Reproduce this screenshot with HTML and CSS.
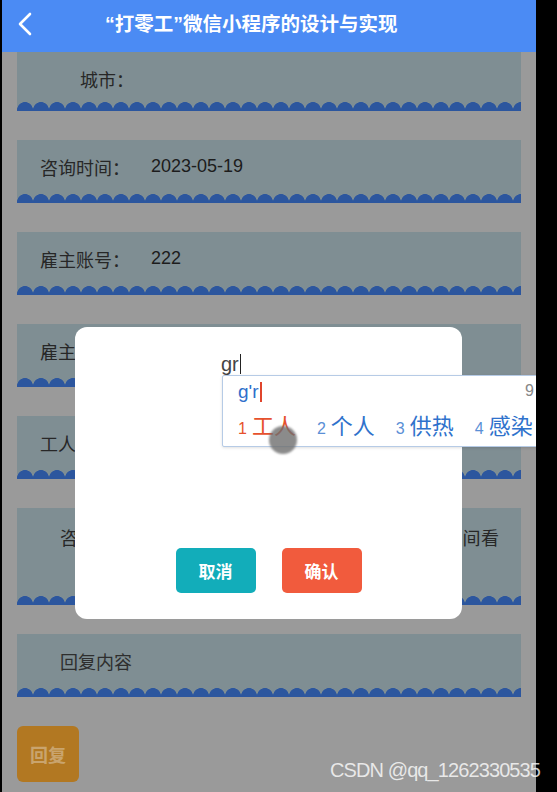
FILE: index.html
```html
<!DOCTYPE html>
<html lang="zh-CN">
<head>
    <meta charset="UTF-8">
    <meta name="viewport" content="width=device-width, initial-scale=1.0">
    <title>“打零工”微信小程序的设计与实现</title>
    <link rel="stylesheet" href="styles.css">
</head>
<body>
    <div class="screen">
        <header class="nav-bar">
            <svg class="nav-back" width="16" height="24" viewBox="0 0 16 24">
                <path d="M13 2 L3 12 L13 22" fill="none" stroke="#fff" stroke-width="2.6" stroke-linecap="round" stroke-linejoin="round"/>
            </svg>
            <h1 class="nav-title">“打零工”微信小程序的设计与实现</h1>
        </header>

        <div class="content">
            <div class="card">
                <div class="card-body card-city">城市：</div>
                <div class="wave"></div>
            </div>
            <div class="card">
                <div class="card-body"><span class="label">咨询时间：</span><span class="value">2023-05-19</span></div>
                <div class="wave"></div>
            </div>
            <div class="card">
                <div class="card-body"><span class="label">雇主账号：</span><span class="value">222</span></div>
                <div class="wave"></div>
            </div>
            <div class="card">
                <div class="card-body"><span class="label">雇主姓名：</span><span class="value">张三</span></div>
                <div class="wave"></div>
            </div>
            <div class="card">
                <div class="card-body"><span class="label">工人账号：</span><span class="value">111</span></div>
                <div class="wave"></div>
            </div>
            <div class="card">
                <div class="card-body card-text">咨询内容：你好，请问这份工作什么时候可以抽时间看</div>
                <div class="wave"></div>
            </div>
            <div class="card">
                <div class="card-body card-placeholder">回复内容</div>
                <div class="wave"></div>
            </div>
            <button class="btn-reply">回复</button>
        </div>

        <!-- reply dialog -->
        <div class="dialog">
            <div class="dialog-input">gr<span class="caret"></span></div>
            <div class="dialog-actions">
                <button class="btn btn-cancel">取消</button>
                <button class="btn btn-ok">确认</button>
            </div>
        </div>

        <!-- input method candidates -->
        <div class="ime">
            <div class="ime-code">g'r<span class="ime-caret"></span><span class="ime-page">9</span></div>
            <div class="ime-list">
                <span class="ime-item active"><i>1</i>工人</span>
                <span class="ime-item"><i>2</i>个人</span>
                <span class="ime-item"><i>3</i>供热</span>
                <span class="ime-item"><i>4</i>感染</span>
            </div>
        </div>
        <div class="touch-dot"></div>
    </div>

    <div class="watermark">CSDN @qq_1262330535</div>
</body>
</html>
```

FILE: styles.css
```css
body {
    margin: 0;
    background: #000;
    width: 557px;
    height: 792px;
    overflow: hidden;
    position: relative;
    font-family: "Liberation Sans", "Noto Sans CJK SC", sans-serif;
}
.screen {
    position: relative;
    margin-left: 2px;
    width: 534px;
    height: 792px;
    background: #9a9a9a;
    overflow: hidden;
}
.nav-bar {
    height: 52px;
    background: #4b8bf4;
    display: flex;
    align-items: center;
}
.nav-back {
    margin-left: 15px;
    margin-top: -4px;
}
.nav-title {
    margin: -8px 0 0 72px;
    font-size: 19.5px;
    font-weight: bold;
    color: #fff;
}
.content {
    padding: 0 15px;
}
.card {
    background: #7f8e93;
    margin-bottom: 29px;
}
.card-body {
    height: 53px;
    display: flex;
    align-items: center;
    padding-left: 23px;
    font-size: 18px;
    color: #272727;
}
.card-city {
    height: 49px;
    padding-top: 5px;
    box-sizing: border-box;
    padding-left: 63px;
}
.label {
    width: 111px;
}
.value {
    font-size: 18px;
    color: #1c1c1c;
}
.card-text {
    height: 87px;
    align-items: flex-start;
    padding-top: 16px;
    box-sizing: border-box;
    padding-left: 43px;
    letter-spacing: 0.3px;
    white-space: nowrap;
}
.card-placeholder {
    padding-left: 43px;
    color: #2e2e2e;
}
.wave {
    height: 10px;
    background: radial-gradient(circle at 8px 9px, #2c569e 7.6px, transparent 8.2px) repeat-x;
    background-size: 16px 10px;
    border-bottom: 1px solid #2c569e;
    box-sizing: border-box;
}
.btn-reply {
    width: 62px;
    height: 56px;
    border: none;
    border-radius: 6px;
    background: #b27822;
    color: #c9a46e;
    font-size: 18px;
    font-weight: bold;
    font-family: "Noto Sans CJK SC", sans-serif;
    padding: 0;
}
.dialog {
    position: absolute;
    left: 73px;
    top: 327px;
    width: 387px;
    height: 292px;
    background: #fff;
    border-radius: 12px;
    display: flex;
    flex-direction: column;
    justify-content: space-between;
    box-sizing: border-box;
    padding: 24px 0 26px;
}
.dialog-input {
    padding-left: 146px;
    font-size: 20px;
    line-height: 26px;
    color: #444;
    display: flex;
    align-items: center;
}
.caret {
    width: 1px;
    height: 20px;
    background: #222;
    margin-left: 1px;
}
.dialog-actions {
    display: flex;
    justify-content: center;
    gap: 26px;
}
.btn {
    width: 80px;
    height: 45px;
    border: none;
    border-radius: 5px;
    color: #fff;
    font-size: 17px;
    font-weight: bold;
    font-family: "Noto Sans CJK SC", sans-serif;
}
.btn-cancel {
    background: #12adba;
}
.btn-ok {
    background: #f15b3d;
}
.ime {
    position: absolute;
    left: 220px;
    top: 375px;
    width: 340px;
    height: 72px;
    background: #fff;
    border: 1px solid #b6cbe6;
    border-radius: 2px;
    box-sizing: border-box;
    box-shadow: 0 1px 3px rgba(0,0,0,0.12);
}
.ime-code {
    position: relative;
    display: flex;
    align-items: center;
    height: 32px;
    padding-left: 15px;
    font-size: 19px;
    color: #2f6fcb;
}
.ime-caret {
    width: 2px;
    height: 20px;
    background: #e0452c;
    margin-left: 1px;
}
.ime-page {
    position: absolute;
    left: 302px;
    top: 6px;
    color: #888;
    font-size: 16px;
}
.ime-list {
    display: flex;
    gap: 21px;
    padding-left: 15px;
    margin-top: 1px;
}
.ime-item {
    font-family: "Noto Sans CJK SC", sans-serif;
    font-size: 22px;
    line-height: 30px;
    color: #2f72cc;
    white-space: nowrap;
}
.ime-item i {
    font-style: normal;
    font-family: "Liberation Sans", sans-serif;
    font-size: 16px;
    margin-right: 5px;
    color: #5a8fd6;
}
.ime-item.active,
.ime-item.active i {
    color: #e6512d;
}
.touch-dot {
    position: absolute;
    left: 267px;
    top: 426px;
    width: 28px;
    height: 28px;
    border-radius: 50%;
    background: rgba(110,110,110,0.8);
    filter: blur(1px);
}
.watermark {
    position: absolute;
    left: 330px;
    top: 759px;
    font-size: 20px;
    letter-spacing: -0.9px;
    color: rgba(255,255,255,0.78);
    white-space: nowrap;
}
```
